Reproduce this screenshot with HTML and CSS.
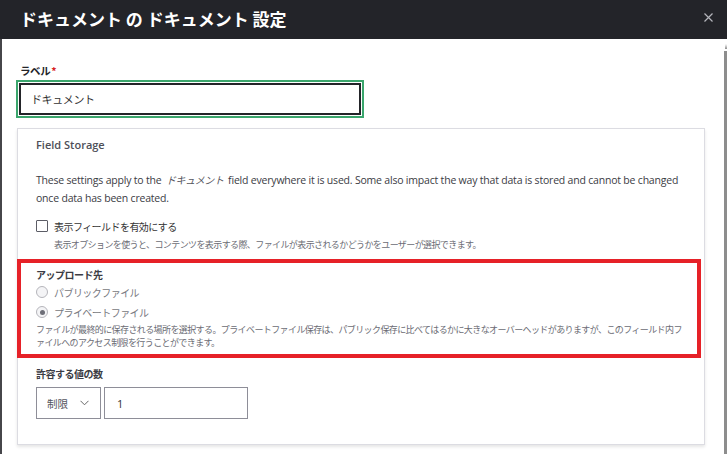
FILE: index.html
```html
<!DOCTYPE html>
<html lang="ja">
<head>
<meta charset="utf-8">
<title>ドキュメント の ドキュメント 設定</title>
<link rel="stylesheet" href="styles.css">
</head>
<body>
<div class="dialog">
  <header class="titlebar">
    <h1 class="title">ドキュメント の ドキュメント 設定</h1>
    <button class="close" aria-label="閉じる">
      <svg width="9" height="9" viewBox="0 0 9 9"><path d="M0.5 0.5 L8.5 8.5 M8.5 0.5 L0.5 8.5" stroke="#b4b5bb" stroke-width="1.2" fill="none"/></svg>
    </button>
  </header>
  <div class="main">
    <div class="backdrop-strip"></div>
    <div class="content">
      <div class="field-label">
        <label class="label">ラベル<span class="req">*</span></label>
        <input class="text-input" type="text" value="ドキュメント">
      </div>
      <section class="card">
        <div class="card-head">Field Storage</div>
        <p class="intro">These settings apply to the <em>ドキュメント</em> field everywhere it is used. Some also impact the way that data is stored and cannot be changed once data has been created.</p>
        <div class="check-row">
          <span class="checkbox"></span>
          <span class="check-label">表示フィールドを有効にする</span>
        </div>
        <div class="desc desc-indent">表示オプションを使うと、コンテンツを表示する際、ファイルが表示されるかどうかをユーザーが選択できます。</div>
        <div class="highlight">
          <div class="group-title">アップロード先</div>
          <div class="radio-row"><span class="radio"></span><span class="radio-label">パブリックファイル</span></div>
          <div class="radio-row"><span class="radio checked"></span><span class="radio-label">プライベートファイル</span></div>
          <div class="desc loose">ファイルが最終的に保存される場所を選択する。プライベートファイル保存は、パブリック保存に比べてはるかに大きなオーバーヘッドがありますが、このフィールド内ファイルへのアクセス制限を行うことができます。</div>
        </div>
        <div class="cardinality">
          <div class="group-title">許容する値の数</div>
          <div class="controls">
            <div class="select">
              <span>制限</span>
              <svg width="9" height="6" viewBox="0 0 9 6"><path d="M0.5 0.8 L4.5 4.8 L8.5 0.8" stroke="#666" stroke-width="1" fill="none"/></svg>
            </div>
            <div class="num-input">1</div>
          </div>
        </div>
      </section>
    </div>
    <div class="scrollbar"><span class="arrow"></span><span class="thumb"></span></div>
  </div>
</div>
</body>
</html>
```
FILE: styles.css
```css
* { box-sizing: border-box; }
html, body { margin: 0; padding: 0; }
body {
  width: 727px;
  height: 454px;
  overflow: hidden;
  background: #ffffff;
  font-family: "Open Sans", "Noto Sans CJK JP", sans-serif;
  color: #333;
}
.dialog { display: flex; flex-direction: column; height: 454px; }
.titlebar {
  height: 39px;
  background: #232429;
  display: flex;
  align-items: center;
  justify-content: space-between;
  padding: 0 14px 0 20px;
  flex: none;
}
.title {
  margin: 0;
  color: #fff;
  font-family: "Noto Sans CJK JP", sans-serif;
  font-size: 17px;
  font-weight: 700;
  letter-spacing: 0;
  line-height: 1;
  padding-bottom: 2px;
}
.close {
  border: 0; background: none; padding: 0; width: 9px; height: 9px;
  display: flex; margin-bottom: 4px;
}
.main { flex: 1; display: flex; min-height: 0; }
.backdrop-strip { width: 2px; background: #46464a; flex: none; }
.content { flex: 1; padding: 25px 0 0 15px; }
.scrollbar { width: 3px; flex: none; display: flex; flex-direction: column; align-items: center; padding-top: 5px; }
.arrow { width: 0; height: 0; border-left: 1.5px solid transparent; border-right: 1.5px solid transparent; border-bottom: 5px solid #8d8d8d; }
.thumb { flex: 1; width: 3px; background: #8d8d8d; margin-top: 2px; }

.field-label { display: flex; flex-direction: column; align-items: flex-start; }
.label {
  font-family: "Noto Sans CJK JP", sans-serif;
  font-size: 10.5px; font-weight: 700; color: #232429;
  line-height: 14px; margin-left: 3px; letter-spacing: -0.4px;
}
.req { color: #d72222; margin-left: 1px; }
.text-input {
  margin: 5px 0 0 2px;
  width: 342px; height: 32px;
  border: 2px solid #232429;
  outline: 2px solid #3ba66d;
  outline-offset: 1px;
  padding: 0 10px;
  font-family: "Noto Sans CJK JP", sans-serif;
  font-size: 11px; color: #333;
  letter-spacing: -0.4px;
  background: #fff;
}
.card {
  margin-top: 13px;
  width: 688px;
  height: 317px;
  border: 1px solid #dcdce2;
  box-shadow: 0 2px 3px rgba(0,0,0,0.10);
  padding: 8px 0 0 0;
}
.card-head { padding: 0 18px; font-size: 11px; font-weight: 600; color: #4e4f58; line-height: 16px; }
.intro { margin: 18px 0 0; padding: 0 12px 0 18px; font-size: 10.5px; letter-spacing: -0.2px; line-height: 18px; color: #3b3c44; }
.intro em { font-family: "Noto Sans CJK JP", sans-serif; font-size: 10px; font-style: italic; letter-spacing: -0.4px; margin: 0 2px; color: #55565e; }
.check-row { display: flex; align-items: center; padding: 0 18px; margin-top: 12px; height: 14px; }
.checkbox { width: 12px; height: 12px; border: 1px solid #5c5d66; border-radius: 1px; margin-right: 6px; background: #fff; }
.check-label { font-family: "Noto Sans CJK JP", sans-serif; font-size: 10px; letter-spacing: -0.55px; color: #333; }
.desc {
  font-family: "Noto Sans CJK JP", sans-serif;
  font-size: 9px; letter-spacing: -0.6px; line-height: 13px; color: #6b6c74;
}
.loose { line-break: loose; }
.desc-indent { padding: 0 18px 0 36px; margin-top: 5px; }
.highlight {
  margin: 8px 3px 0 -1px;
  border: 4px solid #e62128;
  padding: 5px 8px 5px 15px;
}
.group-title { font-family: "Noto Sans CJK JP", sans-serif; font-size: 10px; font-weight: 700; color: #3b3c44; letter-spacing: -0.5px; line-height: 14px; }
.radio-row { display: flex; align-items: center; height: 20px; margin-top: 0; }
.radio { width: 12px; height: 12px; border: 1px solid #b5b5bb; border-radius: 50%; background: #f4f4f6; margin-right: 6px; display: flex; align-items: center; justify-content: center; }
.radio.checked::after { content: ""; width: 5px; height: 5px; border-radius: 50%; background: #6e6f78; }
.radio-label { font-family: "Noto Sans CJK JP", sans-serif; font-size: 10px; letter-spacing: -0.55px; color: #777880; }
.highlight .desc { margin-top: 1px; }
.cardinality { padding: 9px 18px 0 18px; }
.controls { display: flex; gap: 3px; margin-top: 6px; }
.select {
  width: 65px; height: 32px; border: 1px solid #8e8e98;
  display: flex; align-items: center; justify-content: space-between;
  padding: 0 11px 0 10px;
  font-family: "Noto Sans CJK JP", sans-serif; font-size: 10.5px; color: #55565e;
}
.num-input {
  width: 144px; height: 32px; border: 1px solid #8e8e98;
  display: flex; align-items: center; padding: 0 12px;
  font-size: 11px; color: #333;
}
```
